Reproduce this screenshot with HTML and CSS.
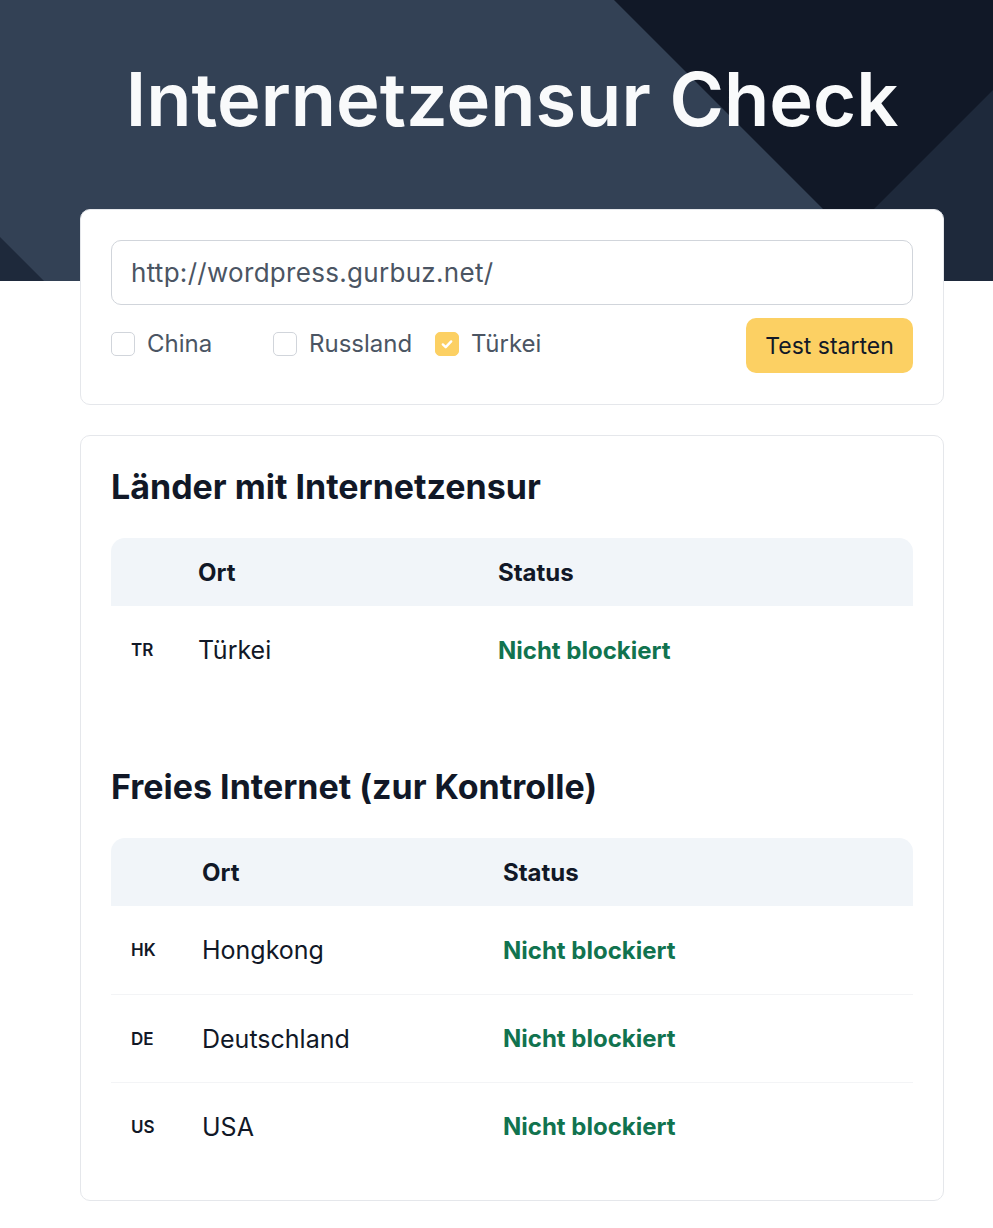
FILE: index.html
```html
<!DOCTYPE html>
<html lang="de">
<head>
    <meta charset="UTF-8">
    <title>Internetzensur Check</title>
    <link rel="stylesheet" href="styles.css">
</head>
<body>
    <header class="hero">
        <svg class="hero-bg" viewBox="0 0 993 281" preserveAspectRatio="none" aria-hidden="true">
            <polygon points="614,0 993,0 993,281 895,281" fill="#111827"/>
            <polygon points="993,90 802,281 993,281" fill="#1e293b"/>
            <polygon points="0,237 44,281 0,281" fill="#1e293b"/>
        </svg>
        <h1>Internetzensur Check</h1>
    </header>

    <main class="wrap">
        <section class="card search">
            <input class="url" type="text" value="http://wordpress.gurbuz.net/">
            <div class="options">
                <div class="countries">
                    <label class="check"><span class="box"></span>China</label>
                    <label class="check"><span class="box"></span>Russland</label>
                    <label class="check"><span class="box on">
                        <svg viewBox="0 0 16 16" width="16" height="16"><path d="M3.8 8.4l2.9 2.8 5.5-5.8" fill="none" stroke="#fff" stroke-width="2.4" stroke-linecap="round" stroke-linejoin="round"/></svg>
                    </span>Türkei</label>
                </div>
                <button class="start">Test starten</button>
            </div>
        </section>

        <section class="card results">
            <h2>Länder mit Internetzensur</h2>
            <table class="status-table tbl-a">
                <thead>
                    <tr><th class="c1"></th><th class="c2">Ort</th><th>Status</th></tr>
                </thead>
                <tbody>
                    <tr><td class="flag">TR</td><td>Türkei</td><td class="ok">Nicht blockiert</td></tr>
                </tbody>
            </table>

            <h2 class="second">Freies Internet (zur Kontrolle)</h2>
            <table class="status-table tbl-b">
                <thead>
                    <tr><th class="c1"></th><th class="c2">Ort</th><th>Status</th></tr>
                </thead>
                <tbody>
                    <tr><td class="flag">HK</td><td>Hongkong</td><td class="ok">Nicht blockiert</td></tr>
                    <tr><td class="flag">DE</td><td>Deutschland</td><td class="ok">Nicht blockiert</td></tr>
                    <tr><td class="flag">US</td><td>USA</td><td class="ok">Nicht blockiert</td></tr>
                </tbody>
            </table>
        </section>
    </main>
</body>
</html>
```

FILE: styles.css
```css
*{
    padding:0;
    margin:0;
    box-sizing: border-box;
}
body{
    font-family: Inter, "Noto Sans", sans-serif;
    color: #111827;
    background: #fff;
}

/* kopfbereich */
.hero{
    position: relative;
    height: 281px;
    background: #334155;
    overflow: hidden;
}
.hero-bg{
    position: absolute;
    left: 0;
    top: 0;
    width: 100%;
    height: 100%;
}
.hero h1{
    position: relative;
    width: 1024px;
    padding-top: 57px;
    text-align: center;
    color: #f9fafb;
    font-size: 74px;
    line-height: 84px;
    font-weight: 600;
}

.wrap{
    width: 864px;
    margin: -72px 0 0 80px;
    position: relative;
}
.card{
    background: #fff;
    border: 1px solid #e5e7eb;
    border-radius: 10px;
    padding: 30px;
}
.search{
    padding-bottom: 31px;
}
.card + .card{
    margin-top: 30px;
}

/* suche */
.url{
    display: block;
    width: 100%;
    height: 65px;
    border: 1px solid #d1d5db;
    border-radius: 10px;
    padding: 0 19px;
    font-family: inherit;
    font-size: 26px;
    letter-spacing: 0.3px;
    color: #4b5563;
    outline: none;
}
.options{
    display: flex;
    justify-content: space-between;
    align-items: center;
    margin-top: 13px;
}
.countries{
    display: grid;
    grid-template-columns: 162px 162px 162px;
    margin-top: -4px;
}
.check{
    display: flex;
    align-items: center;
    gap: 12px;
    font-size: 24px;
    color: #4b5563;
}
.box{
    width: 24px;
    height: 24px;
    border: 1px solid #d1d5db;
    border-radius: 5px;
    display: flex;
    align-items: center;
    justify-content: center;
}
.box.on{
    background: #fcd063;
    border-color: #fcd063;
}
.start{
    width: 167px;
    height: 55px;
    border: 0;
    border-radius: 10px;
    background: #fcd063;
    font-family: inherit;
    font-size: 23px;
    color: #111827;
}

/* ergebnisse */
.results h2{
    font-size: 34px;
    line-height: 42px;
    font-weight: 700;
    color: #111827;
    margin-bottom: 30px;
}
.results h2.second{
    margin-top: 72px;
}
.status-table{
    width: 100%;
    border-collapse: separate;
    border-spacing: 0;
}
.status-table th{
    height: 68px;
    background: #f1f5f9;
    text-align: left;
    font-size: 24px;
    font-weight: 700;
    color: #111827;
}
.status-table th:first-child{
    border-top-left-radius: 14px;
}
.status-table th:last-child{
    border-top-right-radius: 14px;
}
.status-table td{
    height: 88px;
    font-size: 25px;
    color: #111827;
}
.status-table tr + tr td{
    border-top: 1px solid #f3f4f6;
}
.status-table .flag{
    padding-left: 20px;
    font-size: 17px;
    font-weight: 600;
}
.tbl-a .c1{
    width: 87px;
}
.tbl-a .c2{
    width: 300px;
}
.tbl-b .c1{
    width: 91px;
}
.tbl-b .c2{
    width: 301px;
}
.status-table .ok{
    color: #11734f;
    font-size: 24px;
    font-weight: 700;
}
```
